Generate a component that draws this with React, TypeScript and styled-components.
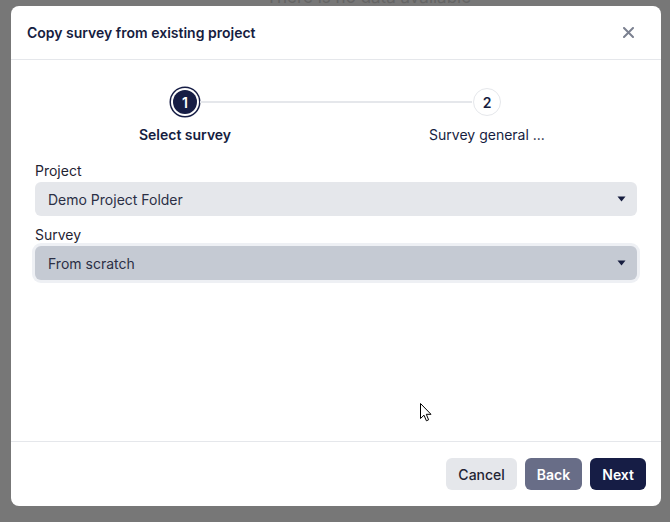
import React from "react";
import styled, { createGlobalStyle } from "styled-components";

const Global = createGlobalStyle`
  html, body { margin: 0; padding: 0; }
  body {
    background: #777777;
    font-family: Inter, "Noto Sans", sans-serif;
    -webkit-font-smoothing: antialiased;
  }
`;

const Backdrop = styled.div`
  position: relative;
  min-height: 522px;
  box-sizing: border-box;
  padding: 6px 9px 16px 11px;
  background: #777777;
  overflow: hidden;
`;

const BehindText = styled.div`
  position: absolute;
  top: -13px;
  left: 266px;
  font-size: 17px;
  color: #646464;
  white-space: nowrap;
`;

const Modal = styled.div`
  position: relative;
  width: 650px;
  height: 500px;
  background: #ffffff;
  border-radius: 8px;
  display: flex;
  flex-direction: column;
  overflow: hidden;
`;

const Header = styled.div`
  height: 53px;
  border-bottom: 1px solid #e5e7eb;
  display: flex;
  align-items: center;
  justify-content: space-between;
  padding: 0 26px 0 16px;
`;

const Title = styled.h2`
  margin: 0;
  font-size: 14px;
  font-weight: 600;
  color: #161d3f;
`;

const CloseButton = styled.button`
  border: 0;
  background: transparent;
  padding: 0;
  width: 14px;
  height: 14px;
  display: flex;
  align-items: center;
  justify-content: center;
  cursor: pointer;
`;

const Body = styled.div`
  flex: 1;
  padding: 28px 24px 0 24px;
  display: flex;
  flex-direction: column;
`;

const Stepper = styled.div`
  display: flex;
  flex-direction: column;
  align-items: center;
`;

const TrackRow = styled.div`
  width: 330px;
  display: flex;
  align-items: center;
`;

const Circle = styled.div<{ $active?: boolean }>`
  box-sizing: border-box;
  width: ${(p) => (p.$active ? "24px" : "28px")};
  height: ${(p) => (p.$active ? "24px" : "28px")};
  margin: ${(p) => (p.$active ? "2px" : "0")};
  border-radius: 50%;
  display: flex;
  align-items: center;
  justify-content: center;
  font-size: 14px;
  font-weight: 600;
  background: ${(p) => (p.$active ? "#161d45" : "#ffffff")};
  color: ${(p) => (p.$active ? "#ffffff" : "#161d3f")};
  border: ${(p) => (p.$active ? "0" : "1px solid #e5e7eb")};
  box-shadow: ${(p) =>
    p.$active ? "0 0 0 2px #ffffff, 0 0 0 3.5px #161d45" : "none"};
`;

const Track = styled.div`
  flex: 1;
  height: 2px;
  background: #e5e7eb;
  margin: 0 1px;
`;

const LabelRow = styled.div`
  width: 302px;
  display: flex;
  justify-content: space-between;
  margin-top: 10px;
`;

const StepLabel = styled.div<{ $active?: boolean }>`
  width: 0;
  display: flex;
  justify-content: center;
  white-space: nowrap;
  font-size: 14px;
  line-height: 18px;
  font-weight: ${(p) => (p.$active ? 600 : 400)};
  color: #161d3f;
`;

const Form = styled.div`
  margin-top: 17px;
  display: flex;
  flex-direction: column;
  gap: 9px;
`;

const Field = styled.div`
  display: flex;
  flex-direction: column;
  gap: 1px;
`;

const Label = styled.label`
  font-size: 14px;
  line-height: 20px;
  color: #1f2433;
`;

const Select = styled.div<{ $focused?: boolean }>`
  height: 34px;
  box-sizing: border-box;
  border-radius: 6px;
  background: ${(p) => (p.$focused ? "#c5cad3" : "#e5e7eb")};
  box-shadow: ${(p) => (p.$focused ? "0 0 0 3px #eef0f4" : "none")};
  display: flex;
  align-items: center;
  justify-content: space-between;
  padding: 0 11px 0 13px;
  font-size: 14px;
  color: #2b2f45;
`;

const Footer = styled.div`
  border-top: 1px solid #e5e7eb;
  padding: 16px 15px 16px 16px;
  display: flex;
  justify-content: flex-end;
  gap: 8px;
`;

const Button = styled.button<{ $variant: "cancel" | "back" | "next" }>`
  height: 32px;
  border: 0;
  border-radius: 6px;
  padding: 0 12px;
  font-family: Inter, "Noto Sans", sans-serif;
  font-size: 14px;
  font-weight: ${(p) => (p.$variant === "cancel" ? 500 : 600)};
  cursor: pointer;
  background: ${(p) =>
    p.$variant === "cancel" ? "#e5e7eb" : p.$variant === "back" ? "#686d87" : "#161d45"};
  color: ${(p) => (p.$variant === "cancel" ? "#1f2433" : "#ffffff")};
`;

const Cursor = styled.svg`
  position: absolute;
  left: 409px;
  top: 397px;
`;

const Caret = () => (
  <svg width="9" height="6" viewBox="0 0 9 6">
    <path d="M0.5 0.5 L8.5 0.5 L4.5 5.5 Z" fill="#161d3f" />
  </svg>
);

export default function App() {
  return (
    <>
      <Global />
      <Backdrop>
        <BehindText>There is no data available</BehindText>
        <Modal>
          <Header>
            <Title>Copy survey from existing project</Title>
            <CloseButton aria-label="Close">
              <svg width="11" height="11" viewBox="0 0 11 11">
                <path d="M1 1 L10 10 M10 1 L1 10" stroke="#7b8090" strokeWidth="2" strokeLinecap="round" />
              </svg>
            </CloseButton>
          </Header>
          <Body>
            <Stepper>
              <TrackRow>
                <Circle $active>1</Circle>
                <Track />
                <Circle>2</Circle>
              </TrackRow>
              <LabelRow>
                <StepLabel $active>Select survey</StepLabel>
                <StepLabel>Survey general ...</StepLabel>
              </LabelRow>
            </Stepper>
            <Form>
              <Field>
                <Label>Project</Label>
                <Select>
                  <span>Demo Project Folder</span>
                  <Caret />
                </Select>
              </Field>
              <Field>
                <Label>Survey</Label>
                <Select $focused>
                  <span>From scratch</span>
                  <Caret />
                </Select>
              </Field>
            </Form>
          </Body>
          <Footer>
            <Button $variant="cancel">Cancel</Button>
            <Button $variant="back">Back</Button>
            <Button $variant="next">Next</Button>
          </Footer>
          <Cursor width="12" height="19" viewBox="0 0 12 19">
            <path
              d="M0.5 0.5 L0.5 15.5 L4 12.2 L6.4 17.8 L8.6 16.8 L6.3 11.3 L11 11.3 Z"
              fill="#ffffff"
              stroke="#000000"
              strokeWidth="1"
              strokeLinejoin="round"
            />
          </Cursor>
        </Modal>
      </Backdrop>
    </>
  );
}
